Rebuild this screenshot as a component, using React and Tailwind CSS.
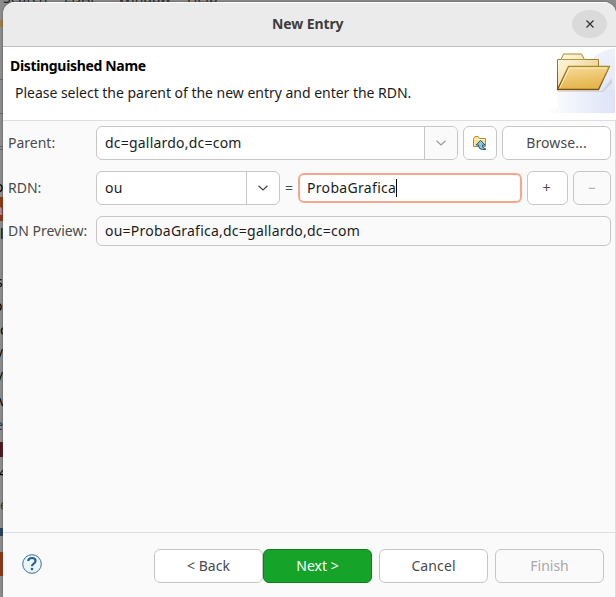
import React from "react";

const edgeMarks = [
  { y: 178, t: "o", c: "-left-[5px] text-black" },
  { y: 201, t: "a", c: "-left-[5px] text-[#b9a59e]" },
  { y: 225, t: "l", c: "left-0 text-black" },
  { y: 273, t: "s", c: "-left-[4px] text-black" },
  { y: 297, t: "o", c: "-left-[6px] text-black" },
  { y: 321, t: "c", c: "left-0 text-black" },
  { y: 345, t: "/", c: "-left-[2px] text-black" },
  { y: 368, t: "/", c: "-left-[2px] text-black" },
  { y: 392, t: "v", c: "-left-px text-black" },
  { y: 416, t: "e", c: "-left-[5px] text-[#17395a]" },
  { y: 464, t: "4", c: "-left-px text-black" },
  { y: 496, t: "e", c: "left-0 text-[#333333]" },
];

function Backdrop() {
  return (
    <div className="absolute inset-0 overflow-hidden bg-[#8c8c8c]">
      <div className="absolute -top-[11px] left-[3px] flex gap-[18px] text-[14px] leading-[18px] text-[#222222]">
        <span className="w-[43px]">Search</span>
        <span className="w-[36px]">LDAP</span>
        <span className="w-[51px]">Window</span>
        <span>Help</span>
      </div>
      <div className="absolute top-[20px] left-0 h-[7px] w-[3px] bg-[#9b7d42]" />
      <div className="absolute top-[79px] left-0 h-px w-[3px] bg-[#666666]" />
      <div className="absolute top-[113px] left-0 h-px w-[3px] bg-[#666666]" />
      <div className="absolute top-[146px] left-0 h-[4px] w-[3px] border-y border-[#666666]" />
      <div className="absolute top-[197px] left-0 h-[24px] w-[3px] bg-[#8f3415]" />
      <div className="absolute top-[442px] left-0 h-[15px] w-[3px] bg-[#4e1820]" />
      <div className="absolute top-[474px] left-0 h-px w-[3px] bg-black" />
      <div className="absolute top-[528px] left-0 h-[8px] w-[3px] bg-[#23455f]" />
      <div className="absolute top-[552px] left-0 h-[24px] w-[3px] bg-[#8f3415]" />
      {edgeMarks.map((m) => (
        <span key={m.y} className={"absolute text-[14px] leading-[18px] " + m.c} style={{ top: m.y }}>
          {m.t}
        </span>
      ))}
    </div>
  );
}

function Folder() {
  return (
    <svg className="block h-[66px] w-[70px]" viewBox="0 0 70 66">
      <defs>
        <linearGradient id="back" x1="0" y1="0" x2="1" y2="1">
          <stop offset="0" stopColor="#fffbe8" />
          <stop offset="1" stopColor="#e9c470" />
        </linearGradient>
        <linearGradient id="front" x1="0" y1="0" x2="0.3" y2="1">
          <stop offset="0" stopColor="#f8dc9c" />
          <stop offset="1" stopColor="#e5b44c" />
        </linearGradient>
        <linearGradient id="edge" x1="0" y1="0" x2="0" y2="1">
          <stop offset="0" stopColor="#a98a2c" />
          <stop offset="1" stopColor="#7e5010" />
        </linearGradient>
        <linearGradient id="glow" x1="0" y1="0" x2="1" y2="0">
          <stop offset="0" stopColor="#ffffff" />
          <stop offset="1" stopColor="#dbe3f7" />
        </linearGradient>
        <linearGradient id="glowTop" x1="0" y1="0" x2="0" y2="1">
          <stop offset="0" stopColor="#eef2fb" />
          <stop offset="1" stopColor="#e1e8f8" />
        </linearGradient>
      </defs>
      <path d="M0 61h11V43h58v23H0z" fill="url(#glow)" />
      <path d="M48 43V9Q58 3 69 1v42z" fill="url(#glowTop)" />
      <path d="M12 44h44l10-13v5l-9 9H12z" fill="#b49a8d" opacity=".3" />
      <path d="M11.500 42.500V12.500H15L17.500 7H35.500L38.500 12.500H52.500V42.500Z" fill="url(#back)" stroke="url(#edge)" />
      <path d="M15.500 12.500H38" stroke="#b69645" />
      <path d="M11.500 42.500L22.500 19.500H63.500L52.500 42.500Z" fill="url(#front)" stroke="url(#edge)" strokeWidth="1.300" />
      <path d="M14 40.500L23.500 21H61" fill="none" stroke="#fff0c5" />
    </svg>
  );
}

function UpFolder() {
  return (
    <svg className="block h-4 w-4" viewBox="0 0 16 16">
      <path d="M1.500 11.500V3.500L3 1.500H6L7.500 3.500H13.500V11.500Z" fill="#fbe09a" stroke="#c48524" />
      <path d="M2.500 4.500H13" stroke="#fff7d8" />
      <path d="M8.500 5.300L13 10H10.600V11.500Q10.800 13.500 13.500 13.700V14.500H10.500Q6.700 14.300 6.600 11V10H4.200Z" fill="#8fc6d4" stroke="#1f568a" />
    </svg>
  );
}

function Chevron() {
  return (
    <svg className="h-[6px] w-[12px]" viewBox="0 0 12 6" fill="none" stroke="currentColor" strokeWidth="1.200">
      <path d="M1.500 .7L6 4.900L10.500 .7" />
    </svg>
  );
}

const box = "flex shrink-0 items-center rounded-[6px] border border-[#c6c6c6]";

export default function App() {
  return (
    <div className="relative h-[597px] w-[616px] overflow-hidden font-['Noto_Sans',sans-serif] text-[14px] leading-[18px] text-[#4b4b4b]">
      <Backdrop />
      <main className="relative flex h-full flex-col pt-[2px] pl-[3px]">
        <div className="flex h-full w-[613px] flex-col overflow-hidden rounded-t-[12px] bg-[#fafafa] shadow-[0_0_2px_#444]">
          <header className="flex h-[45px] shrink-0 items-center border-b border-[#bdbdbd] bg-[#ebebeb] pl-[269px] shadow-[inset_0_1px_#fff]">
            <h1 className="w-[71px] font-bold tracking-[-0.1px] whitespace-nowrap text-[#3d3d3d]">New Entry</h1>
            <button className="ml-[229px] flex h-[28px] w-[35px] items-center justify-center rounded-[50%] bg-[#dadada]">
              <svg className="h-[8px] w-[8px]" viewBox="0 0 8 8" stroke="#333" strokeWidth="1.300">
                <path d="M.5 .5l7 7m0-7l-7 7" />
              </svg>
            </button>
          </header>
          <section className="flex h-[74px] shrink-0 justify-between border-b border-[#dedede] bg-white">
            <div className="pt-[10px] pl-[7px] text-black">
              <h2 className="font-bold tracking-[-0.33px]">Distinguished Name</h2>
              <p className="mt-[9px] ml-[5px] tracking-[-0.02px] whitespace-nowrap text-[#1c1c1c]">Please select the parent of the new entry and enter the RDN.</p>
            </div>
            <Folder />
          </section>
          <section className="flex flex-1 flex-col border-r border-[#dedede] pt-[5px] pl-[5px]">
            <div className="flex h-[34px] items-center">
              <label className="w-[88px]">Parent:</label>
              <div className={box + " h-[34px] w-[362px] bg-white text-[#1c1c1c]"}>
                <span className="w-[327px] pl-[8px] tracking-[0.21px]">dc=gallardo,dc=com</span>
                <span className="flex h-full flex-1 items-center justify-center rounded-r-[5px] border-l border-[#c6c6c6] bg-[#fafafa] text-[#999]"><Chevron /></span>
              </div>
              <button className={box + " ml-[5px] h-[34px] w-[34px] justify-center bg-white"}><UpFolder /></button>
              <button className={box + " ml-[5px] h-[34px] w-[109px] justify-center bg-white tracking-[0.1px]"}>Browse...</button>
            </div>
            <div className="mt-[11px] flex h-[34px] items-center">
              <label className="w-[88px]">RDN:</label>
              <div className={box + " h-[34px] w-[184px] bg-white text-[#1c1c1c]"}>
                <span className="w-[149px] pl-[8px] tracking-[0.2px]">ou</span>
                <span className="flex h-full flex-1 items-center justify-center border-l border-[#c6c6c6] text-[#444]"><Chevron /></span>
              </div>
              <span className="w-[18px] pl-[5px]">=</span>
              <div className="flex h-[30px] w-[224px] items-center rounded-[6px] border-2 border-[#f5a78e] bg-white pl-[7px] text-[#1c1c1c]">
                <span className="tracking-[0.32px]">ProbaGrafica</span><span className="h-[18px] w-px bg-black" />
              </div>
              <button className={box + " ml-[5px] h-[34px] w-[41px] justify-center bg-white pr-[2px]"}>+</button>
              <button className={box + " ml-[5px] h-[34px] w-[38px] justify-center text-[#aaa]"}>−</button>
            </div>
            <div className="mt-[11px] flex h-[30px] items-center">
              <label className="w-[88px] whitespace-nowrap">DN Preview:</label>
              <div className={box + " h-[30px] w-[515px] pl-[8px] tracking-[0.23px] text-[#1c1c1c]"}>ou=ProbaGrafica,dc=gallardo,dc=com</div>
            </div>
          </section>
          <footer className="flex h-[65px] shrink-0 border-t border-r border-[#dedede] pt-[16px] pl-[19px]">
            <svg className="mt-[5px] h-[20px] w-[20px]" viewBox="0 0 20 20">
              <circle cx="10" cy="10" r="9.300" fill="#eaf5fb" stroke="#386e9d" />
              <path d="M6.200 7Q6.500 4 10 4Q13.500 4 13.500 7Q13.500 8.500 11.500 9.800Q10 10.800 10 12.200" fill="none" stroke="#286092" strokeWidth="2.200" />
              <circle cx="10" cy="15" r="1.300" fill="#286092" />
            </svg>
            <button className={box + " ml-[112px] h-[34px] w-[109px] justify-center bg-white"}>&lt; Back</button>
            <button className="flex h-[34px] w-[109px] items-center justify-center rounded-[6px] border border-[#117d1e] bg-[#15a32a] text-white">Next &gt;</button>
            <button className={box + " ml-[7px] h-[34px] w-[109px] justify-center bg-white tracking-[0.1px]"}>Cancel</button>
            <button className={box + " ml-[7px] h-[34px] w-[109px] justify-center text-[#a8a8a8]"}>Finish</button>
          </footer>
        </div>
      </main>
    </div>
  );
}
